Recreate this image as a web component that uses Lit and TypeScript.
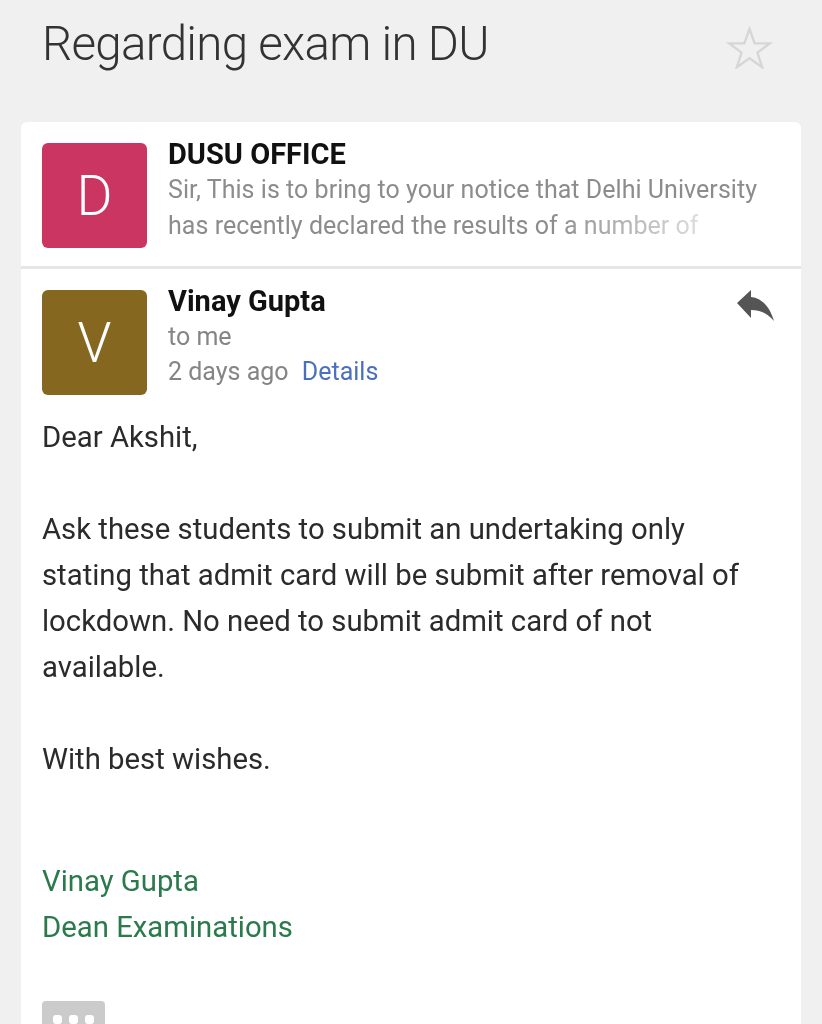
import { LitElement, html, css } from "lit";
import { customElement } from "lit/decorators.js";

@customElement("app-root")
export class AppRoot extends LitElement {
  static styles = css`
    :host {
      display: block;
      height: 1024px;
      overflow: hidden;
      background: #f0f0f0;
      font-family: Roboto, "Liberation Sans", sans-serif;
      filter: blur(0.45px);
    }
    .subject-row {
      display: flex;
      justify-content: space-between;
      height: 122px;
      box-sizing: border-box;
      padding: 14px 49px 0 42px;
    }
    .subject {
      margin: 0;
      font-size: 47.5px;
      font-weight: 300;
      line-height: 60px;
      letter-spacing: -0.7px;
      color: #333;
    }
    .star {
      width: 47px;
      height: 43px;
      margin-top: 12px;
    }
    .card {
      margin: 0 21px;
      background: #fff;
      border-radius: 6px 6px 0 0;
      height: 902px;
    }
    .message {
      display: flex;
      gap: 21px;
      padding: 21px 21px 0;
    }
    .collapsed {
      height: 123px;
      border-bottom: 3px solid #e6e6e6;
    }
    .avatar {
      flex: none;
      width: 105px;
      height: 105px;
      border-radius: 6px;
      display: flex;
      align-items: center;
      justify-content: center;
      color: #fff;
      font-size: 55px;
      font-weight: 300;
    }
    .pink { background: #cb3561; }
    .brown { background: #866720; }
    .meta {
      flex: 1;
      min-width: 0;
      margin-top: -7px;
    }
    .sender {
      font-size: 29px;
      font-weight: 700;
      line-height: 36px;
      color: #111;
    }
    .snippet {
      font-size: 25px;
      line-height: 36px;
      letter-spacing: 0.04px;
      color: #8c8c8c;
      white-space: nowrap;
    }
    .fade {
      display: block;
      width: 530px;
      -webkit-mask-image: linear-gradient(to right, #000 72%, rgba(0, 0, 0, 0.3) 100%);
      mask-image: linear-gradient(to right, #000 72%, rgba(0, 0, 0, 0.3) 100%);
    }
    .sub {
      font-size: 25px;
      line-height: 35px;
      color: #858585;
    }
    .details {
      color: #4a6fbd;
      margin-left: 7px;
    }
    .reply {
      width: 40px;
      height: 34px;
      margin-right: 5px;
      margin-top: -1px;
      flex: none;
    }
    .body {
      padding: 19px 21px 0;
      font-size: 29.3px;
      line-height: 46px;
      color: #2b2b2b;
    }
    .body p { margin: 0 0 46px; }
    .signature {
      color: #2a7a4c;
      margin-top: 76px;
    }
    .more {
      display: flex;
      align-items: center;
      justify-content: center;
      gap: 7px;
      width: 63px;
      height: 36px;
      margin-top: 51px;
      background: #cbcbcb;
      border-radius: 4px;
    }
    .more i {
      width: 9px;
      height: 9px;
      border-radius: 3px;
      background: #fff;
    }
  `;

  render() {
    return html`
      <div class="subject-row">
        <h1 class="subject">Regarding exam in DU</h1>
        <svg class="star" viewBox="0 0 50 46" fill="none" stroke="#d6d6d6" stroke-width="2.5">
          <path d="M25 3 L30.5 18.5 L47 18.5 L33.5 28.5 L38.5 44 L25 34.5 L11.5 44 L16.5 28.5 L3 18.5 L19.5 18.5 Z" />
        </svg>
      </div>
      <div class="card">
        <div class="message collapsed">
          <div class="avatar pink">D</div>
          <div class="meta">
            <div class="sender">DUSU OFFICE</div>
            <div class="snippet">Sir, This is to bring to your notice that Delhi University</div>
            <div class="snippet"><span class="fade">has recently declared the results of a number of</span></div>
          </div>
        </div>
        <div class="message">
          <div class="avatar brown">V</div>
          <div class="meta">
            <div class="sender">Vinay Gupta</div>
            <div class="sub">to me</div>
            <div class="sub">2 days ago <span class="details">Details</span></div>
          </div>
          <svg class="reply" viewBox="0 0 40 34" fill="#555">
            <path d="M2 14 L16 1 L16 8 C27 9 35 18 39 32 C33 25 26 21 16 21 L16 29 Z" />
          </svg>
        </div>
        <div class="body">
          <p>Dear Akshit,</p>
          <p>Ask these students to submit an undertaking only<br />
          stating that admit card will be submit after removal of<br />
          lockdown. No need to submit admit card of not<br />
          available.</p>
          <p>With best wishes.</p>
          <div class="signature">Vinay Gupta<br />Dean Examinations</div>
          <div class="more"><i></i><i></i><i></i></div>
        </div>
      </div>
    `;
  }
}
